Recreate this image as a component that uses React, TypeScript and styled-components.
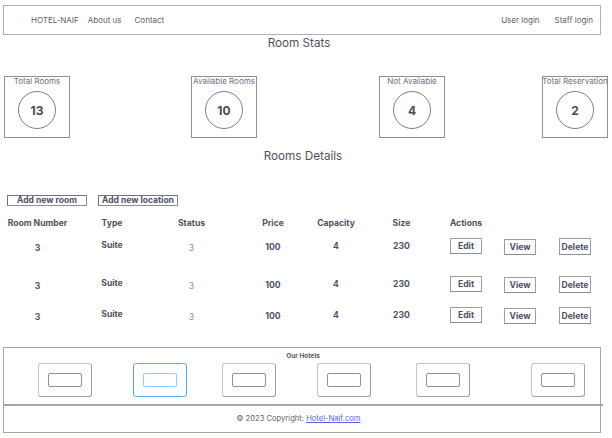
import React from "react";
import styled, { createGlobalStyle } from "styled-components";

const Global = createGlobalStyle`
  html, body { margin: 0; padding: 0; background: #ffffff; }
  body { font-family: Inter, "Liberation Sans", sans-serif; color: #4b5163; }
`;

const Page = styled.div`
  width: 612px;
  display: flex;
  flex-direction: column;
`;

const Nav = styled.nav`
  margin: 5px 11px 0 3px;
  height: 30px;
  box-sizing: border-box;
  border: 1px solid #adb0ba;
  display: flex;
  align-items: center;
  justify-content: space-between;
  padding: 0 7px 0 27px;
  font-size: 8px;
  color: #5a5f6e;
`;

const NavGroup = styled.div<{ $gap: number }>`
  display: flex;
  align-items: center;
  gap: ${(p) => p.$gap}px;
`;

const NavItem = styled.span<{ $ml?: number }>`
  white-space: nowrap;
  line-height: 10px;
  margin-left: ${(p) => p.$ml ?? 0}px;
`;

const SectionTitle = styled.h2<{ $mt: number; $shift: number }>`
  margin: ${(p) => p.$mt}px 0 0 0;
  font-size: 11.7px;
  line-height: 14px;
  font-weight: 400;
  color: #50535c;
  text-align: center;
  padding-right: ${(p) => p.$shift}px;
`;

const StatsRow = styled.div`
  display: flex;
  margin-top: 26px;
`;

const StatCard = styled.div<{ $ml: number }>`
  margin-left: ${(p) => p.$ml}px;
  width: 66px;
  height: 62px;
  box-sizing: border-box;
  border: 1px solid #8e919c;
  display: flex;
  flex-direction: column;
  align-items: center;
`;

const StatLabel = styled.div`
  font-size: 8px;
  line-height: 9px;
  color: #6b6f7c;
  white-space: nowrap;
  display: flex;
  justify-content: center;
  width: 100%;
`;

const Circle = styled.div`
  margin-top: 5px;
  width: 38px;
  height: 38px;
  box-sizing: border-box;
  border: 1px solid #7b7f8b;
  border-radius: 50%;
  display: flex;
  align-items: center;
  justify-content: center;
  font-size: 12px;
  font-weight: 700;
  color: #474c5b;
`;

const ButtonRow = styled.div`
  display: flex;
  gap: 11px;
  margin: 32px 0 0 7px;
`;

const AddButton = styled.button`
  width: 80px;
  height: 11px;
  box-sizing: border-box;
  border: 1px solid #8a8d98;
  border-top-color: #6f7380;
  border-left-color: #6f7380;
  background: #fff;
  padding: 0;
  font-family: inherit;
  font-size: 8.5px;
  font-weight: 700;
  line-height: 9px;
  color: #4b5163;
  display: flex;
  align-items: center;
  justify-content: center;
  white-space: nowrap;
`;

const Grid = styled.div<{ $h: number; $mt: number }>`
  display: grid;
  grid-template-columns: 61px 88px 71px 92px 34px 97px 32px 76px 34px;
  height: ${(p) => p.$h}px;
  margin-top: ${(p) => p.$mt}px;
  padding-left: 7px;
`;

const Cell = styled.div<{ $light?: boolean; $dy?: number }>`
  display: flex;
  align-items: center;
  justify-content: center;
  white-space: nowrap;
  font-size: 8.6px;
  line-height: 10px;
  font-weight: ${(p) => (p.$light ? 400 : 700)};
  color: ${(p) => (p.$light ? "#8a8e99" : "#4b5163")};
  transform: translateY(${(p) => p.$dy ?? 0}px);
`;

const ActionButton = styled.button<{ $h: number; $dy: number }>`
  width: 32px;
  height: ${(p) => p.$h}px;
  box-sizing: border-box;
  border: 1px solid #9a9da8;
  border-bottom-color: #8a8d98;
  background: #fff;
  padding: 0;
  font-family: inherit;
  font-size: 8.6px;
  font-weight: 700;
  color: #4b5163;
  display: flex;
  align-items: center;
  justify-content: center;
  transform: translateY(${(p) => p.$dy}px);
  white-space: nowrap;
`;

const Footer = styled.footer`
  margin: 24px 11px 0 3px;
  height: 86px;
  box-sizing: border-box;
  border: 1px solid #a3a6b0;
  display: flex;
  flex-direction: column;
  padding-top: 4px;
`;

const FooterHeading = styled.div`
  font-size: 6.5px;
  line-height: 8px;
  font-weight: 700;
  color: #555a68;
  text-align: center;
  padding-left: 2px;
`;

const HotelRow = styled.div`
  display: flex;
  margin-top: 3px;
`;

const HotelCard = styled.div<{ $ml: number; $active?: boolean }>`
  margin-left: ${(p) => p.$ml}px;
  width: 54px;
  height: 34px;
  box-sizing: border-box;
  border-radius: 3px;
  border: ${(p) => (p.$active ? "1.5px solid #5aabf5" : "1px solid #9ea1ab")};
  border-top-color: ${(p) => (p.$active ? "#5aabf5" : "#c3c5cc")};
  border-left-color: ${(p) => (p.$active ? "#5aabf5" : "#c3c5cc")};
  display: flex;
  align-items: center;
  justify-content: center;
`;

const HotelInner = styled.div<{ $active?: boolean }>`
  width: 34px;
  height: 14px;
  box-sizing: border-box;
  border-radius: 2px;
  border: 1px solid ${(p) => (p.$active ? "#8ad0f3" : "#8e919b")};
`;

const Divider = styled.div`
  margin: 7px -3px 0 0;
  height: 2px;
  background: #a4a7b1;
`;

const Copyright = styled.div`
  margin-top: 8px;
  font-size: 7.6px;
  line-height: 9px;
  color: #5f6370;
  text-align: center;
  padding-right: 7px;
`;

const Link = styled.a`
  color: #5b63e0;
  text-decoration: underline;
`;

const stats = [
  { label: "Total Rooms", value: 13, ml: 4 },
  { label: "Available Rooms", value: 10, ml: 121 },
  { label: "Not Available", value: 4, ml: 122 },
  { label: "Total Reservation", value: 2, ml: 97 },
];

const headers = ["Room Number", "Type", "Status", "Price", "Capacity", "Size", "Actions", "", ""];

const rows = [
  { h: 17, mt: 9 },
  { h: 17, mt: 21 },
  { h: 17, mt: 14 },
];

const hotels = [
  { ml: 34 },
  { ml: 41, active: true },
  { ml: 35 },
  { ml: 41 },
  { ml: 45 },
  { ml: 61 },
];

export default function App() {
  return (
    <>
      <Global />
      <Page>
        <Nav>
          <NavGroup $gap={9}>
            <NavItem>HOTEL-NAIF</NavItem>
            <NavItem>About us</NavItem>
            <NavItem $ml={4}>Contact</NavItem>
          </NavGroup>
          <NavGroup $gap={15}>
            <NavItem>User login</NavItem>
            <NavItem>Staff login</NavItem>
          </NavGroup>
        </Nav>

        <SectionTitle $mt={1} $shift={14}>Room Stats</SectionTitle>

        <StatsRow>
          {stats.map((s) => (
            <StatCard key={s.label} $ml={s.ml}>
              <StatLabel>{s.label}</StatLabel>
              <Circle>{s.value}</Circle>
            </StatCard>
          ))}
        </StatsRow>

        <SectionTitle $mt={11} $shift={6}>Rooms Details</SectionTitle>

        <ButtonRow>
          <AddButton>Add new room</AddButton>
          <AddButton>Add new location</AddButton>
        </ButtonRow>

        <Grid $h={10} $mt={12}>
          {headers.map((h, i) => (
            <Cell key={i}>{h}</Cell>
          ))}
        </Grid>

        {rows.map((r, i) => (
          <Grid key={i} $h={r.h} $mt={r.mt}>
            <Cell $dy={2}>3</Cell>
            <Cell $dy={-1}>Suite</Cell>
            <Cell $light $dy={2}>3</Cell>
            <Cell $dy={1}>100</Cell>
            <Cell>4</Cell>
            <Cell>230</Cell>
            <Cell>
              <ActionButton $h={16} $dy={0}>Edit</ActionButton>
            </Cell>
            <Cell>
              <ActionButton $h={16} $dy={1}>View</ActionButton>
            </Cell>
            <Cell>
              <ActionButton $h={17} $dy={1}>Delete</ActionButton>
            </Cell>
          </Grid>
        ))}

        <Footer>
          <FooterHeading>Our Hotels</FooterHeading>
          <HotelRow>
            {hotels.map((h, i) => (
              <HotelCard key={i} $ml={h.ml} $active={h.active}>
                <HotelInner $active={h.active} />
              </HotelCard>
            ))}
          </HotelRow>
          <Divider />
          <Copyright>
            © 2023 Copyright: <Link href="#">Hotel-Naif.com</Link>
          </Copyright>
        </Footer>
      </Page>
    </>
  );
}
